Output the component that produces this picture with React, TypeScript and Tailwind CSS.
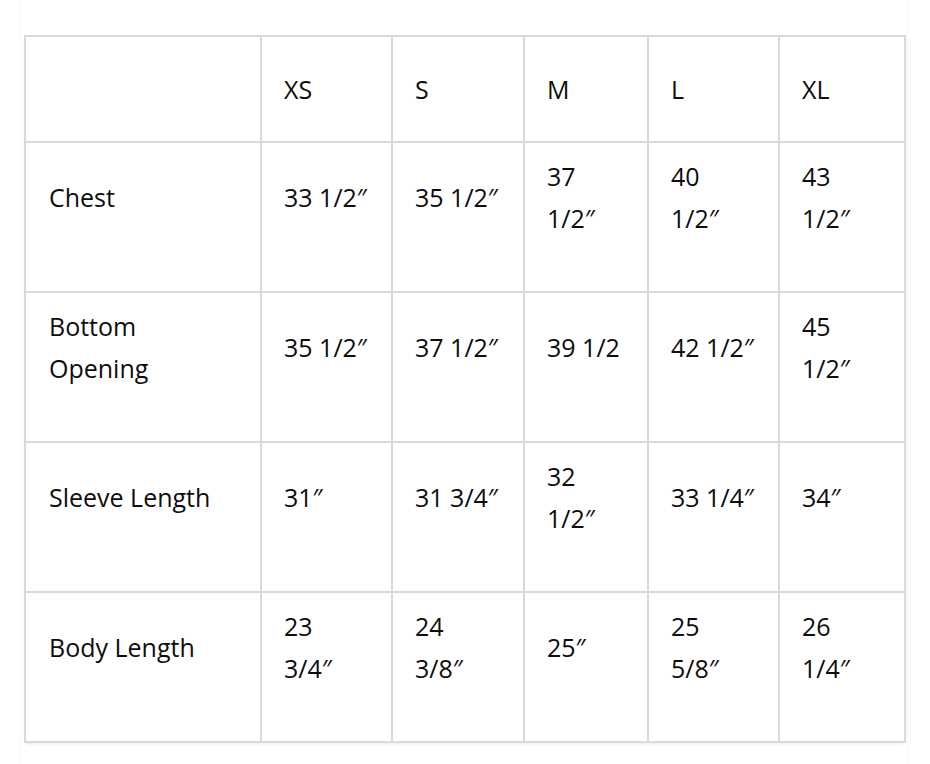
import React from "react";

const sizes = ["XS", "S", "M", "L", "XL"];

const rows: { label: React.ReactNode; values: React.ReactNode[] }[] = [
  {
    label: "Chest",
    values: [
      "33 1/2″",
      "35 1/2″",
      <>37<br />1/2″</>,
      <>40<br />1/2″</>,
      <>43<br />1/2″</>,
    ],
  },
  {
    label: <>Bottom<br />Opening</>,
    values: ["35 1/2″", "37 1/2″", "39 1/2", "42 1/2″", <>45<br />1/2″</>],
  },
  {
    label: "Sleeve Length",
    values: ["31″", "31 3/4″", <>32<br />1/2″</>, "33 1/4″", "34″"],
  },
  {
    label: "Body Length",
    values: [
      <>23<br />3/4″</>,
      <>24<br />3/8″</>,
      "25″",
      <>25<br />5/8″</>,
      <>26<br />1/4″</>,
    ],
  },
];

const widths = [236, 131, 132, 124, 131, 126];

export default function App() {
  return (
    <div
      className="w-[930px] h-[764px] bg-white overflow-hidden text-[#0d0d0d]"
      style={{ fontFamily: '"Open Sans", "Liberation Sans", sans-serif' }}
    >
      <div className="ml-[20px] w-[888px] h-full border-x border-[#f7f7f7] pt-[35px] pl-[3px]">
        <table className="table-fixed border-collapse w-[882px] rounded-b-[6px] shadow-[0_2px_3px_rgba(0,0,0,0.06)]">
          <colgroup>
            {widths.map((w, i) => (
              <col key={i} style={{ width: w }} />
            ))}
          </colgroup>
          <thead>
            <tr className="h-[106px]">
              <th className="border-2 border-[#d9d9d9]"></th>
              {sizes.map((s) => (
                <th
                  key={s}
                  className="border-2 border-[#d9d9d9] text-left font-normal align-middle pl-[22px] text-[25px] leading-[42px]"
                >
                  {s}
                </th>
              ))}
            </tr>
          </thead>
          <tbody>
            {rows.map((r, i) => (
              <tr key={i} className="h-[150px]">
                <td className="border-2 border-[#d9d9d9] align-middle pl-[23px] pb-[40px] text-[25px] leading-[42px]">
                  {r.label}
                </td>
                {r.values.map((v, j) => (
                  <td
                    key={j}
                    className="border-2 border-[#d9d9d9] align-middle pl-[22px] pb-[40px] text-[25px] leading-[42px] whitespace-nowrap"
                  >
                    {v}
                  </td>
                ))}
              </tr>
            ))}
          </tbody>
        </table>
      </div>
    </div>
  );
}
